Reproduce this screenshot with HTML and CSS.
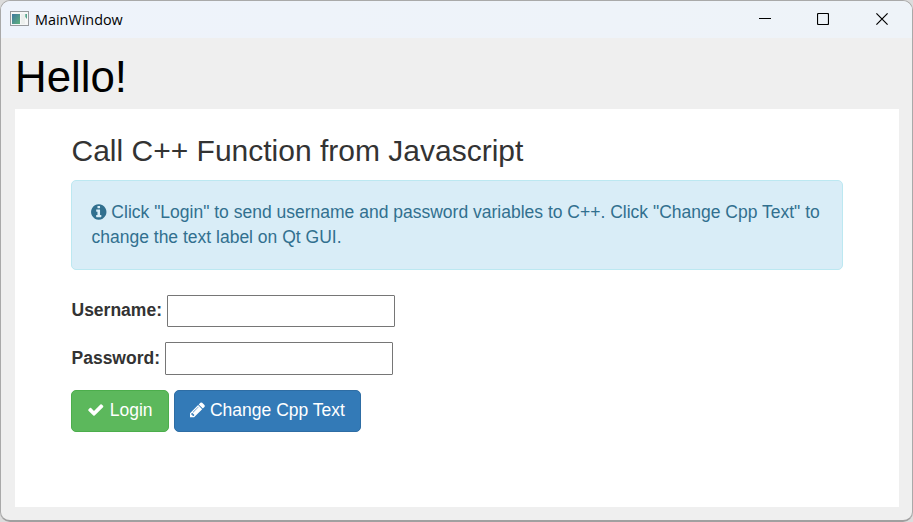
FILE: index.html
```html
<!DOCTYPE html>
<html lang="en">
<head>
<meta charset="utf-8">
<title>MainWindow</title>
<link rel="stylesheet" href="styles.css">
</head>
<body>
<div class="window">
  <header class="titlebar">
    <svg class="app-icon" width="19" height="15" viewBox="0 0 19 15">
      <defs><linearGradient id="pane" x1="0" y1="0" x2="1" y2="1"><stop offset="0" stop-color="#3f78a0"/><stop offset="1" stop-color="#5fb27c"/></linearGradient></defs>
      <rect x=".5" y=".5" width="18" height="14" fill="#f6f7f7" stroke="#979a9d"/>
      <rect x="2" y="3" width="8" height="10" fill="url(#pane)"/>
      <rect x="11" y="3" width="4" height="10" fill="#ecefed"/>
      <path d="M15.3 3h1.7v5l-1.7-2z" fill="#55a48b"/>
    </svg>
    <span class="title">MainWindow</span>
    <div class="controls">
      <svg width="12" height="12" viewBox="0 0 12 12"><path d="M0 5.5h12"/></svg>
      <svg width="12" height="12" viewBox="0 0 12 12"><rect x=".5" y=".5" width="11" height="11" rx="1"/></svg>
      <svg width="12" height="12" viewBox="0 0 12 12"><path d="M.4.4l11.2 11.2M11.6.4L.4 11.6"/></svg>
    </div>
  </header>
  <div class="hello">Hello!</div>
  <main class="view">
    <h3>Call C++ Function from Javascript</h3>
    <div class="alert"><svg class="fa info" viewBox="128 0 1536 1792"><path d="M1152 1376v-160q0-14-9-23t-23-9h-96v-512q0-14-9-23t-23-9h-320q-14 0-23 9t-9 23v160q0 14 9 23t23 9h96v320h-96q-14 0-23 9t-9 23v160q0 14 9 23t23 9h448q14 0 23-9t9-23zm-128-896v-160q0-14-9-23t-23-9h-192q-14 0-23 9t-9 23v160q0 14 9 23t23 9h192q14 0 23-9t9-23zm640 416q0 209-103 385.5t-279.5 279.5-385.5 103-385.5-103-279.5-279.5-103-385.5 103-385.5 279.5-279.5 385.5-103 385.5 103 279.5 279.5 103 385.5z"/></svg> Click "Login" to send username and password variables to C++. Click "Change Cpp Text" to change the text label on Qt GUI.</div>
    <form>
      <div class="row"><label for="username">Username:</label><input id="username" type="text"></div>
      <div class="row"><label for="password">Password:</label><input id="password" type="password"></div>
      <div class="buttons">
        <button type="button" class="btn success"><svg class="fa" viewBox="0 0 1792 1792"><path d="M1671 566q0 40-28 68l-724 724-136 136q-28 28-68 28t-68-28l-136-136-362-362q-28-28-28-68t28-68l136-136q28-28 68-28t68 28l294 295 656-657q28-28 68-28t68 28l136 136q28 28 28 68z"/></svg> Login</button>
        <button type="button" class="btn primary"><svg class="fa pencil" viewBox="128 0 1536 1792"><path d="M491 1536l91-91-235-235-91 91v107h128v128h107zm523-928q0-22-22-22-10 0-17 7l-542 542q-7 7-7 17 0 22 22 22 10 0 17-7l542-542q7-7 7-17zm-54-192l416 416-832 832h-416v-416zm683 96q0 53-37 90l-166 166-416-416 166-165q36-38 90-38 53 0 91 38l235 234q37 39 37 91z"/></svg> Change Cpp Text</button>
      </div>
    </form>
  </main>
</div>
</body>
</html>
```
FILE: styles.css
```css
* { box-sizing: border-box; }
html { background: #dcdcdc; }
body { margin: 0; font-family: "Liberation Sans", Arial, sans-serif; }
.window {
  width: 913px;
  height: 522px;
  background: #efefef;
  border: 1px solid #a9a9a9;
  border-bottom: 2px solid #a0a0a0;
  border-radius: 10px;
  overflow: hidden;
}
.titlebar {
  display: flex;
  align-items: flex-start;
  height: 37px;
  padding: 10px 24px 0 9px;
  background: linear-gradient(90deg, #eef3fb, #eef3f8);
}
.app-icon { display: block; margin-right: 6px; }
.title { margin-top: -1px; font: 14.4px/20px "Open Sans", sans-serif; color: #000; }
.controls { display: flex; gap: 47px; margin: 2px 0 0 auto; }
.controls svg { display: block; fill: none; stroke: #000; stroke-width: 1.2; }
.controls svg:first-child { margin-right: -1px; }
.hello { height: 71px; padding: 14px 0 0 14px; font-size: 43.8px; line-height: 50px; color: #000; }
.view {
  width: 884px;
  height: 398px;
  margin-left: 14px;
  padding: 25px 56px 0;
  background: #fff;
  color: #333;
  font-size: 17.5px;
  line-height: 25px;
}
h3 { margin: 0 0 13px; padding-left: .5px; font-size: 30px; font-weight: 400; line-height: 33px; }
.alert {
  height: 90px;
  margin-bottom: 25px;
  padding: 18.5px 19px 18.5px 19.5px;
  background: #d9edf7;
  border: 1px solid #bce8f1;
  border-radius: 5px;
  color: #31708f;
}
.fa { display: inline-block; width: 17.5px; height: 17.5px; fill: currentColor; vertical-align: -2.5px; }
.pencil { width: 15px; }
.info { width: 15.5px; height: 18px; margin: 0 0 0 -.5px; vertical-align: -3px; }
.row { display: flex; align-items: flex-start; height: 32px; margin-bottom: 15px; }
.row + .row { height: 33px; }
label { margin-right: 5px; padding: 3px 0 0 .5px; font-weight: 700; }
.row + .row label { margin-right: 4.5px; padding-top: 4px; }
input {
  width: 228px;
  height: 100%;
  margin: 0;
  border: 1px solid #767676;
  border-radius: 1px;
  background: #fff;
  font: inherit;
}
.buttons { display: flex; gap: 5px; }
.btn {
  height: 42px;
  padding: 0 15px 2px;
  border: 1px solid;
  border-radius: 5px;
  color: #fff;
  font: inherit;
  white-space: nowrap;
}
.success { width: 98px; background: #5cb85c; border-color: #4cae4c; }
.primary { width: 187px; background: #337ab7; border-color: #2e6da4; }
```
